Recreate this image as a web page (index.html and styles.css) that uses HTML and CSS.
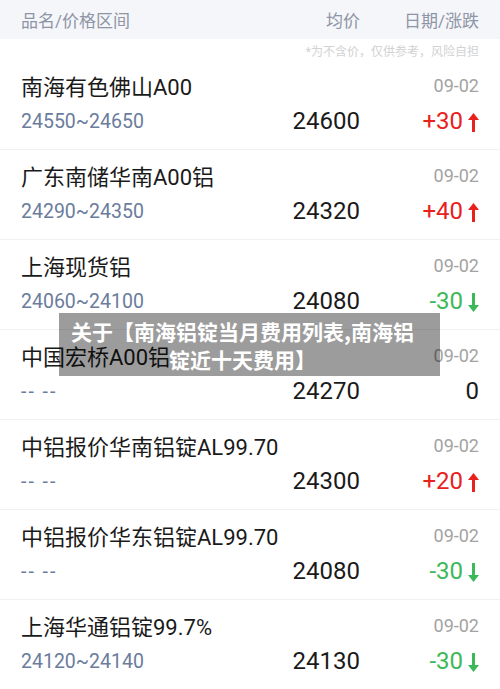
FILE: index.html
```html
<!DOCTYPE html>
<html lang="zh-CN">
<head>
  <meta charset="UTF-8">
  <title>南海铝锭价格</title>
  <link rel="stylesheet" href="styles.css">
</head>
<body>

  <div class="price-table">
    <div class="table-head">
      <span>品名/价格区间</span>
      <span class="col-avg">均价</span>
      <span class="col-end">日期/涨跌</span>
    </div>
    <div class="table-note">*为不含价，仅供参考，风险自担</div>

    <div class="price-row">
      <div class="name">南海有色佛山A00</div>
      <div class="date">09-02</div>
      <div class="range">24550~24650</div>
      <div class="avg">24600</div>
      <div class="change up">+30<svg class="arrow" viewBox="0 0 11 19"><path d="M5.5 0 L11 7 L7 7 L7 19 L4 19 L4 7 L0 7 Z"/></svg></div>
    </div>

    <div class="price-row">
      <div class="name">广东南储华南A00铝</div>
      <div class="date">09-02</div>
      <div class="range">24290~24350</div>
      <div class="avg">24320</div>
      <div class="change up">+40<svg class="arrow" viewBox="0 0 11 19"><path d="M5.5 0 L11 7 L7 7 L7 19 L4 19 L4 7 L0 7 Z"/></svg></div>
    </div>

    <div class="price-row">
      <div class="name">上海现货铝</div>
      <div class="date">09-02</div>
      <div class="range">24060~24100</div>
      <div class="avg">24080</div>
      <div class="change down">-30<svg class="arrow" viewBox="0 0 11 19"><path d="M5.5 19 L11 12 L7 12 L7 0 L4 0 L4 12 L0 12 Z"/></svg></div>
    </div>

    <div class="price-row">
      <div class="name">中国宏桥A00铝</div>
      <div class="date">09-02</div>
      <div class="range empty">-- --</div>
      <div class="avg">24270</div>
      <div class="change">0</div>
    </div>

    <div class="price-row">
      <div class="name">中铝报价华南铝锭AL99.70</div>
      <div class="date">09-02</div>
      <div class="range empty">-- --</div>
      <div class="avg">24300</div>
      <div class="change up">+20<svg class="arrow" viewBox="0 0 11 19"><path d="M5.5 0 L11 7 L7 7 L7 19 L4 19 L4 7 L0 7 Z"/></svg></div>
    </div>

    <div class="price-row">
      <div class="name">中铝报价华东铝锭AL99.70</div>
      <div class="date">09-02</div>
      <div class="range empty">-- --</div>
      <div class="avg">24080</div>
      <div class="change down">-30<svg class="arrow" viewBox="0 0 11 19"><path d="M5.5 19 L11 12 L7 12 L7 0 L4 0 L4 12 L0 12 Z"/></svg></div>
    </div>

    <div class="price-row">
      <div class="name">上海华通铝锭99.7%</div>
      <div class="date">09-02</div>
      <div class="range">24120~24140</div>
      <div class="avg">24130</div>
      <div class="change down">-30<svg class="arrow" viewBox="0 0 11 19"><path d="M5.5 19 L11 12 L7 12 L7 0 L4 0 L4 12 L0 12 Z"/></svg></div>
    </div>
  </div>

  <div class="title-overlay">关于【南海铝锭当月费用列表,南海铝锭近十天费用】</div>

</body>
</html>
```

FILE: styles.css
```css
body {
  margin: 0;
  font-family: Roboto, 'Noto Sans CJK SC', sans-serif;
  background-color: #fff;
  color: #1a1a1a;
  position: relative;
  overflow: hidden;
}

.table-head,
.price-row {
  display: grid;
  grid-template-columns: 1fr 110px 119px;
  padding: 0 21px;
}

.table-head {
  height: 39px;
  align-items: center;
  background-color: #f5f6fa;
  color: #8e95a5;
  font-size: 17px;
}

.col-avg,
.col-end {
  text-align: right;
}

.table-note {
  height: 21px;
  padding: 0 21px;
  text-align: right;
  font-size: 12px;
  line-height: 26px;
  color: #d2d2d2;
}

.price-row {
  box-sizing: border-box;
  height: 90px;
  padding-top: 10px;
  grid-template-rows: 30px 30px;
  row-gap: 6px;
  align-items: center;
  border-bottom: 1px solid #f1f1f1;
}

.name {
  grid-column: 1 / 3;
  font-size: 22px;
  white-space: nowrap;
}

.date {
  text-align: right;
  font-size: 18px;
  color: #a3a3a3;
}

.range {
  font-size: 19.5px;
  color: #6b7c9c;
}

.range.empty {
  letter-spacing: 2px;
}

.avg {
  text-align: right;
  font-size: 24px;
}

.change {
  display: flex;
  justify-content: flex-end;
  align-items: center;
  font-size: 24px;
}

.change.up {
  color: #e8211c;
}

.change.down {
  color: #3cb95a;
}

.arrow {
  width: 11px;
  height: 19px;
  margin-left: 5px;
  margin-top: 2px;
  fill: currentColor;
}

.title-overlay {
  position: absolute;
  top: 313px;
  left: 59px;
  width: 381px;
  box-sizing: border-box;
  padding: 4px 22px 3px 8px;
  background-color: rgba(0, 0, 0, 0.39);
  color: #fff;
  font-family: 'Noto Sans CJK SC', sans-serif;
  font-weight: bold;
  font-size: 21px;
  line-height: 28px;
  text-align: center;
}
```
